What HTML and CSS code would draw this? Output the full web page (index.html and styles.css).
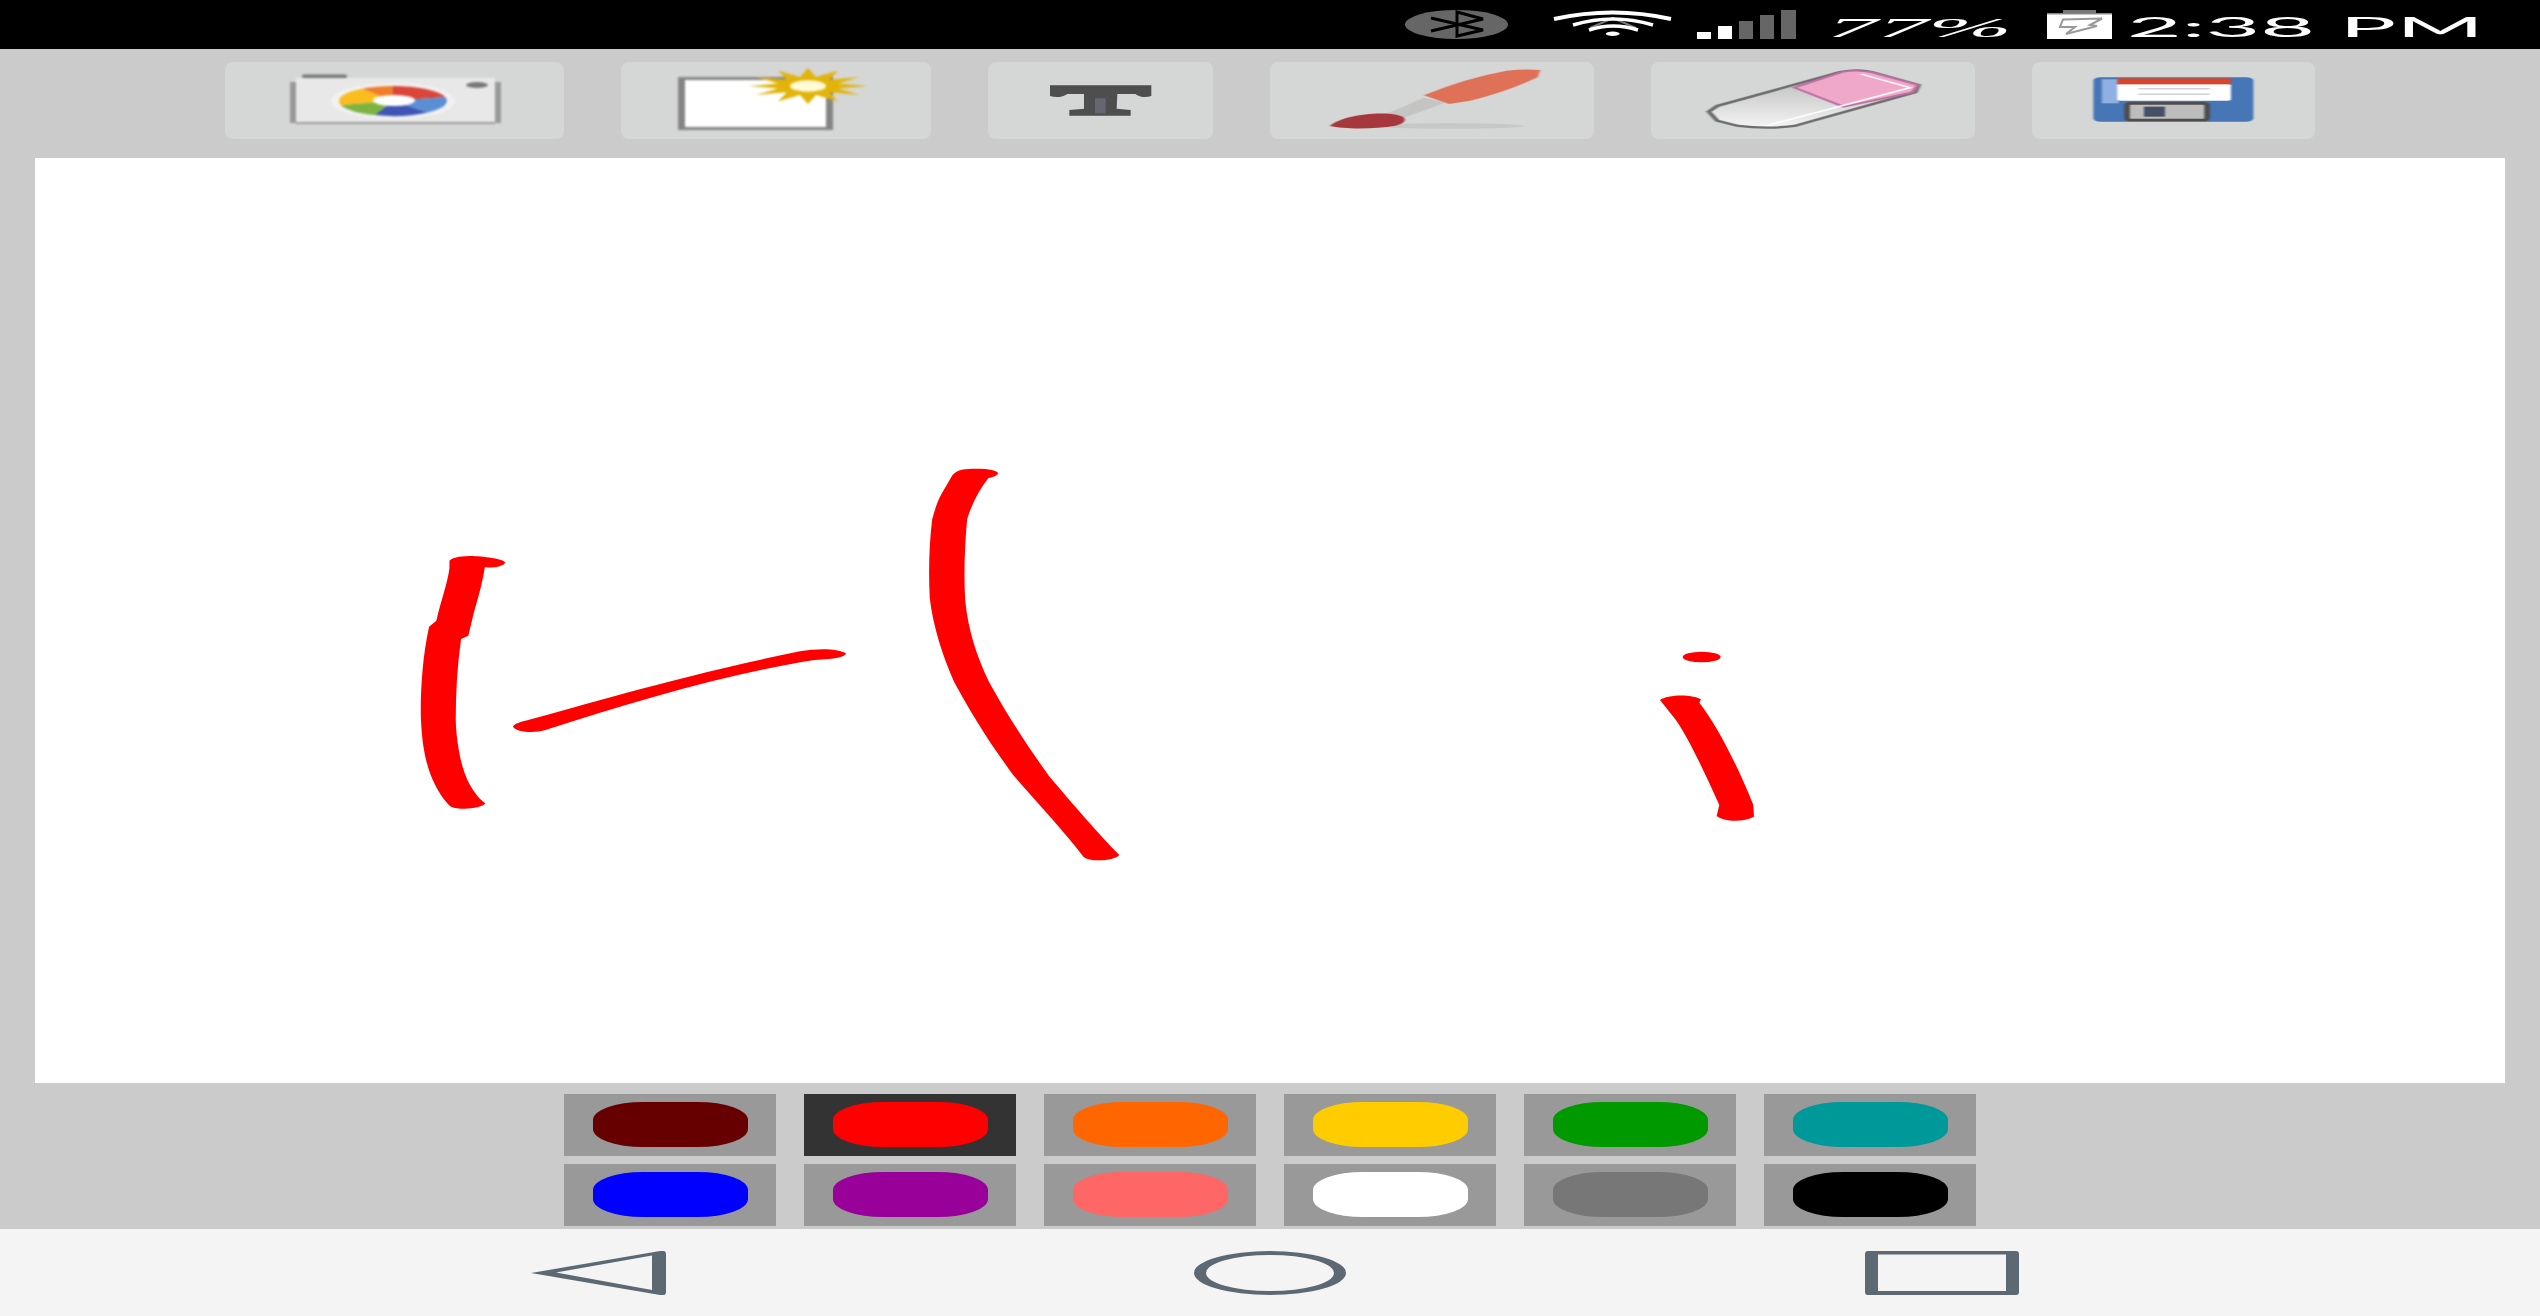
FILE: index.html
```html
<!DOCTYPE html>
<html lang="en">
<head>
<meta charset="utf-8">
<title>Paint</title>
<link rel="stylesheet" href="styles.css">
</head>
<body>
<div class="screen">
  <header class="status">
    <svg class="st st-bt" viewBox="1405 0 103 48"><ellipse cx="1456.5" cy="24.5" rx="51.5" ry="14.5" fill="#666"/><path d="M1431 18L1483 30L1457 36V12L1483 19L1431 31" fill="none" stroke="#000" stroke-width="3"/></svg>
    <svg class="st st-wifi" viewBox="1553 0 119 48"><path d="M1590 28L1613 18L1636 28" fill="none" stroke="#777" stroke-width="2"/><g fill="none" stroke="#fff"><path d="M1554 19Q1613 6 1671 19" stroke-width="4"/><path d="M1573 25Q1613 13 1653 25" stroke-width="3.5"/><path d="M1589 30Q1613 22 1638 30" stroke-width="3.5"/></g><ellipse cx="1612.7" cy="33.7" rx="7" ry="2.2" fill="#fff"/></svg>
    <svg class="st st-sig" viewBox="1697 0 99 48"><rect x="1697" y="32" width="14" height="7" fill="#fff"/><rect x="1718" y="26" width="14" height="13" fill="#fff"/><rect x="1739" y="21" width="14" height="18" fill="#666"/><rect x="1760" y="15" width="14" height="24" fill="#666"/><rect x="1781" y="10" width="15" height="29" fill="#666"/></svg>
    <svg class="st st-pct" viewBox="1827 0 185 48"><text class="st-text" x="1827" y="37" textLength="185" lengthAdjust="spacingAndGlyphs">77%</text></svg>
    <svg class="st st-bat" viewBox="2047 0 65 48"><rect x="2063" y="10" width="33" height="4" fill="#777"/><rect x="2047" y="13" width="65" height="26" fill="#fff"/><rect x="2047" y="13" width="65" height="1.5" fill="#888"/><path d="M2063 19.5L2102 18.5L2090 25L2097 26L2066 34L2075 27L2060 27Z" fill="none" stroke="#999" stroke-width="2"/></svg>
    <svg class="st st-time" viewBox="2127 0 357 48"><text class="st-text st-upright" x="2127" y="37" textLength="357" lengthAdjust="spacingAndGlyphs">2:38 PM</text></svg>
  </header>

  <nav class="tools">
    <button class="tool tool-camera">
      <svg class="tool-art" viewBox="225 62 339 77">
        <g class="soft">
          <rect x="302" y="74.5" width="45" height="3.5" rx="1.7" fill="#777"/>
          <rect x="290" y="82" width="6" height="41" fill="#999"/>
          <rect x="495" y="82" width="6" height="41" fill="#999"/>
          <rect x="296" y="78" width="199" height="45" fill="#e8e8e8"/>
          <rect x="296" y="122" width="199" height="2" fill="#9c9c9c"/>
          <ellipse cx="477" cy="85" rx="11" ry="3" fill="#777"/>
          <ellipse cx="393" cy="101" rx="62" ry="18" fill="#f1f1f1"/>
          <g transform="translate(393 101) scale(54 15)">
            <path d="M0 0V-1A1 1 0 0 1 .966 -.259Z" fill="#db4437"/>
            <path d="M0 0L.966 -.259A1 1 0 0 1 .643 .766Z" fill="#5b8fd4"/>
            <path d="M0 0L.643 .766A1 1 0 0 1 -.342 .94Z" fill="#3f55b5"/>
            <path d="M0 0L-.342 .94A1 1 0 0 1 -.966 .259Z" fill="#7cb342"/>
            <path d="M0 0L-.966 .259A1 1 0 0 1 -.574 -.819Z" fill="#fbbc1e"/>
            <path d="M0 0L-.574 -.819A1 1 0 0 1 0 -1Z" fill="#ef7d2b"/>
          </g>
          <ellipse cx="394" cy="100.5" rx="21" ry="5.5" fill="#fff"/>
        </g>
      </svg>
    </button>
    <button class="tool tool-new">
      <svg class="tool-art" viewBox="621 62 310 77">
        <g class="soft">
          <rect x="678" y="77" width="155" height="53" fill="#858585"/>
          <rect x="685" y="80" width="141" height="47" fill="#fff"/>
          <g transform="translate(808 86) scale(60 18)">
            <path fill="#e2b40a" d="M1 0L.5 .134L.866 .5L.354 .354L.5 .866L.134 .5L0 1L-.134 .5L-.5 .866L-.354 .354L-.866 .5L-.5 .134L-1 0L-.5 -.134L-.866 -.5L-.354 -.354L-.5 -.866L-.134 -.5L0 -1L.134 -.5L.5 -.866L.354 -.354L.866 -.5L.5 -.134Z"/>
            <ellipse rx=".3" ry=".32" fill="#fffbd8"/>
          </g>
        </g>
      </svg>
    </button>
    <button class="tool tool-text">
      <svg class="tool-art" viewBox="988 62 225 77">
        <g class="soft" transform="translate(1040 70) scale(.3333)">
          <path fill="#4e4e4e" d="M30 46H334V78C318 84 298 82 286 72H232L230 116L272 120V137H88V120L132 116V72H82C70 82 46 84 30 78Z"/>
          <rect x="165" y="85" width="32" height="45" fill="#666672"/>
        </g>
      </svg>
    </button>
    <button class="tool tool-brush">
      <svg class="tool-art" viewBox="1270 62 324 77">
        <g class="soft" transform="translate(1240 50) scale(.7018 .3333)">
          <ellipse cx="300" cy="228" rx="105" ry="8" fill="#c6c7c6"/>
          <path fill="#c4c4c2" d="M208 192L262 143L292 158L228 208Z"/>
          <path fill="#de7156" d="M262 136Q320 85 380 62Q405 56 428 60L424 82Q380 125 328 152L298 162Z"/>
          <path fill="#a5373d" d="M128 228C142 203 180 186 216 192C240 198 240 216 222 227C190 238 150 238 128 228Z"/>
        </g>
      </svg>
    </button>
    <button class="tool tool-eraser">
      <svg class="tool-art" viewBox="1651 62 324 77">
        <defs>
          <linearGradient id="eraser-grey" x1="0" y1="0" x2="0" y2="1">
            <stop offset="0" stop-color="#b5b6b6"/>
            <stop offset="1" stop-color="#f4f4f4"/>
          </linearGradient>
        </defs>
        <g class="soft" transform="translate(1240 50) scale(.7018 .3333)">
          <path fill="url(#eraser-grey)" stroke="#6e6e6e" stroke-width="7" d="M668 185L680 168L855 66Q880 56 900 66L967 105L962 127L790 228Q750 238 710 228L680 212Z"/>
          <path fill="#f0a8c8" stroke="#bd6fa2" stroke-width="5" d="M790 113L858 66Q880 58 900 67L966 105L958 127L860 170Z"/>
          <path fill="none" stroke="#fff" stroke-width="4" d="M752 226L955 113L885 72"/>
        </g>
      </svg>
    </button>
    <button class="tool tool-save">
      <svg class="tool-art" viewBox="2032 62 283 77">
        <g class="soft" transform="translate(1240 50) scale(.7018 .3333)">
          <rect x="1216" y="82" width="228" height="133" rx="10" fill="#4676b6"/>
          <rect x="1228" y="88" width="24" height="72" fill="#8fb0e0"/>
          <rect x="1250" y="102" width="162" height="50" rx="4" fill="#fff"/>
          <rect x="1250" y="85" width="162" height="18" fill="#d9452b"/>
          <rect x="1280" y="115" width="102" height="3" fill="#bbb"/>
          <rect x="1280" y="131" width="102" height="3" fill="#bbb"/>
          <rect x="1264" y="160" width="114" height="50" rx="5" fill="#bdbdbd" stroke="#4d4d4d" stroke-width="8"/>
          <rect x="1288" y="170" width="30" height="30" fill="#445066"/>
        </g>
      </svg>
    </button>
  </nav>

  <main class="canvas">
    <svg class="ink" viewBox="35 158 2470 925">
      <g fill="#f00">
        <g transform="translate(400 440) scale(.4847 .3333)">
          <path d="M102 362C110 350 130 348 150 348C180 350 215 358 217 368C212 380 190 384 175 382C170 430 160 480 152 520L141 587L126 597C118 680 115 760 115 840C116 900 125 970 135 1005C142 1035 160 1075 176 1090C170 1105 125 1112 105 1100C92 1085 75 1050 62 1000C50 950 45 900 43 830C42 760 46 650 60 560L75 542C85 480 98 430 102 385Z"/>
          <path d="M233 860C236 850 250 846 270 838C380 795 570 710 825 634C860 626 900 624 920 640C918 652 900 657 855 660C680 700 480 785 300 870C280 880 240 878 233 860Z"/>
          <path d="M1140 105C1150 88 1165 86 1190 86C1215 86 1233 92 1234 100C1230 110 1222 112 1214 114C1195 150 1180 190 1170 238C1165 320 1163 400 1166 480C1172 570 1190 650 1215 725C1255 830 1295 920 1340 1010C1390 1095 1440 1180 1484 1245C1475 1262 1425 1268 1410 1250C1365 1165 1315 1090 1265 1005C1215 905 1180 825 1143 725C1120 650 1100 560 1093 475C1090 390 1092 310 1098 238C1104 205 1110 180 1118 160Z"/>
        </g>
        <g transform="translate(1640 630) scale(.3333)">
          <ellipse cx="185" cy="81" rx="57" ry="16"/>
          <path d="M60 210C80 195 150 190 183 208L178 218C230 285 290 400 340 525L342 560C310 578 250 575 230 558L238 525C190 420 140 310 100 260Z"/>
        </g>
      </g>
    </svg>
  </main>

  <section class="palette">
    <div class="swatch"><span class="pill c-maroon"></span></div>
    <div class="swatch is-active"><span class="pill c-red"></span></div>
    <div class="swatch"><span class="pill c-orange"></span></div>
    <div class="swatch"><span class="pill c-yellow"></span></div>
    <div class="swatch"><span class="pill c-green"></span></div>
    <div class="swatch"><span class="pill c-teal"></span></div>
    <div class="swatch"><span class="pill c-blue"></span></div>
    <div class="swatch"><span class="pill c-purple"></span></div>
    <div class="swatch"><span class="pill c-pink"></span></div>
    <div class="swatch"><span class="pill c-white"></span></div>
    <div class="swatch"><span class="pill c-gray"></span></div>
    <div class="swatch"><span class="pill c-black"></span></div>
  </section>

  <footer class="navbar">
    <svg class="nav-icon nav-back" viewBox="531 1251 135 44"><g class="soft-nav"><path fill-rule="evenodd" d="M531 1273L660 1251Q666 1250 666 1254V1292Q666 1296 660 1295ZM556 1272.5L652 1290V1255.5Z"/></g></svg>
    <svg class="nav-icon nav-home" viewBox="1194 1251 152 44"><g class="soft-nav"><path fill-rule="evenodd" d="M1194 1273A76 22 0 0 1 1346 1273A76 22 0 0 1 1194 1273ZM1206 1273A64 18 0 0 0 1334 1273A64 18 0 0 0 1206 1273Z"/></g></svg>
    <svg class="nav-icon nav-recent" viewBox="1865 1251 154 44"><g class="soft-nav"><path fill-rule="evenodd" d="M1868 1251H2016Q2019 1251 2019 1254V1292Q2019 1295 2016 1295H1868Q1865 1295 1865 1292V1254Q1865 1251 1868 1251ZM1878 1254.5V1291H2006V1254.5Z"/></g></svg>
  </footer>
</div>
</body>
</html>
```

FILE: styles.css
```css
* { box-sizing: border-box; }
html, body { margin: 0; padding: 0; }
body { background: #ccc; }

.screen {
  width: 2540px;
  height: 1316px;
  display: flex;
  flex-direction: column;
  background: #cbcbcb;
  overflow: hidden;
}

/* Status bar */
.status {
  height: 49px;
  flex: none;
  background: #000;
  display: flex;
  justify-content: flex-end;
  padding-right: 56px;
}
.st { height: 48px; display: block; flex: none; filter: blur(.4px); }
.st-bt { width: 103px; }
.st-wifi { width: 119px; margin-left: 45px; }
.st-sig { width: 99px; margin-left: 25px; }
.st-pct { width: 185px; margin-left: 31px; }
.st-bat { width: 65px; margin-left: 35px; }
.st-time { width: 357px; margin-left: 15px; }
.st-text {
  font-family: "Liberation Serif", serif;
  font-style: italic;
  font-size: 27px;
  fill: #fff;
}
.st-upright {
  font-family: "Lato", sans-serif;
  font-style: normal;
  font-weight: 400;
  font-size: 26px;
}

/* Toolbar */
.tools {
  flex: none;
  display: flex;
  justify-content: center;
  gap: 57px;
  padding: 13px 0 19px;
}
.tool {
  display: block;
  height: 77px;
  padding: 0;
  border: 0;
  border-radius: 8px;
  background: #d5d7d6;
}
.tool-camera { width: 339px; }
.tool-new { width: 310px; }
.tool-text { width: 225px; }
.tool-brush { width: 324px; }
.tool-eraser { width: 324px; }
.tool-save { width: 283px; }
.tool-art { display: block; width: 100%; height: 100%; }
.soft { filter: blur(1.3px); }

/* Drawing area */
.canvas {
  flex: none;
  height: 925px;
  margin: 0 35px;
  background: #fff;
}
.ink { display: block; width: 100%; height: 100%; }

/* Palette */
.palette {
  flex: none;
  display: grid;
  grid-template-columns: repeat(6, 212px);
  grid-auto-rows: 62px;
  gap: 8px 28px;
  justify-content: center;
  padding: 11px 0 3px;
}
.swatch {
  background: #999;
  display: flex;
  justify-content: center;
  padding-top: 8px;
}
.swatch.is-active { background: #333; }
.pill {
  display: block;
  width: 155px;
  height: 45px;
  border-radius: 50px / 18px;
}
.c-maroon { background: #600; }
.c-red { background: #f00; }
.c-orange { background: #f60; }
.c-yellow { background: #fc0; }
.c-green { background: #090; }
.c-teal { background: #099; }
.c-blue { background: #00f; }
.c-purple { background: #909; }
.c-pink { background: #f66; }
.c-white { background: #fff; }
.c-gray { background: #777; }
.c-black { background: #000; }

/* Navigation bar */
.navbar {
  flex: 1;
  background: #f4f4f4;
  display: grid;
  grid-template-columns: repeat(3, 672px);
  justify-content: center;
  justify-items: center;
  align-items: center;
}
.nav-icon { display: block; height: 44px; fill: #5c6973; }
.soft-nav { filter: blur(.5px); }
.nav-back { width: 135px; }
.nav-home { width: 152px; }
.nav-recent { width: 154px; }
```
